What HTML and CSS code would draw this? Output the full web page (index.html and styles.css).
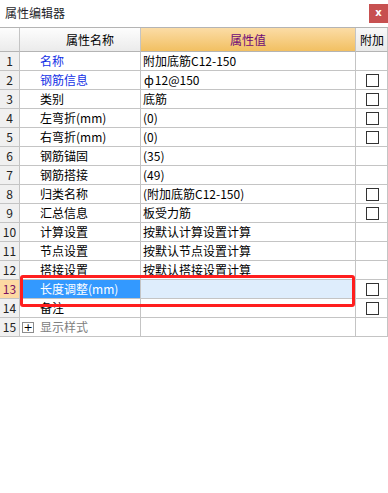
FILE: index.html
```html
<!DOCTYPE html>
<html lang="zh-CN">
<head>
    <meta charset="UTF-8">
    <title>属性编辑器</title>
    <link rel="stylesheet" href="styles.css">
</head>
<body>
    <div class="window">
        <div class="title-bar">
            <span class="title">属性编辑器</span>
            <span class="close">x</span>
        </div>

        <div class="grid">
            <div class="hd num"></div>
            <div class="hd name">属性名称</div>
            <div class="hd value">属性值</div>
            <div class="hd extra">附加</div>

            <div class="num">1</div><div class="name link">名称</div><div class="value">附加底筋C12-150</div><div class="extra"></div>
            <div class="num">2</div><div class="name link">钢筋信息</div><div class="value"><span class="bar">ф</span>12@150</div><div class="extra"><span class="check"></span></div>
            <div class="num">3</div><div class="name">类别</div><div class="value">底筋</div><div class="extra"><span class="check"></span></div>
            <div class="num">4</div><div class="name">左弯折(mm)</div><div class="value">(0)</div><div class="extra"><span class="check"></span></div>
            <div class="num">5</div><div class="name">右弯折(mm)</div><div class="value">(0)</div><div class="extra"><span class="check"></span></div>
            <div class="num">6</div><div class="name">钢筋锚固</div><div class="value">(35)</div><div class="extra"></div>
            <div class="num">7</div><div class="name">钢筋搭接</div><div class="value">(49)</div><div class="extra"></div>
            <div class="num">8</div><div class="name">归类名称</div><div class="value">(附加底筋C12-150)</div><div class="extra"><span class="check"></span></div>
            <div class="num">9</div><div class="name">汇总信息</div><div class="value">板受力筋</div><div class="extra"><span class="check"></span></div>
            <div class="num">10</div><div class="name">计算设置</div><div class="value">按默认计算设置计算</div><div class="extra"></div>
            <div class="num">11</div><div class="name">节点设置</div><div class="value">按默认节点设置计算</div><div class="extra"></div>
            <div class="num">12</div><div class="name">搭接设置</div><div class="value">按默认搭接设置计算</div><div class="extra"></div>
            <div class="num current">13</div><div class="name selected">长度调整(mm)</div><div class="value editing"></div><div class="extra"><span class="check"></span></div>
            <div class="num">14</div><div class="name">备注</div><div class="value"></div><div class="extra"><span class="check"></span></div>
            <div class="num">15</div><div class="name group"><span class="plus">+</span>显示样式</div><div class="value"></div><div class="extra"></div>
        </div>

        <div class="mark"></div>
    </div>
</body>
</html>
```

FILE: styles.css
```css
* {
    margin: 0;
    padding: 0;
    box-sizing: border-box;
}

body {
    background-color: #fff;
    font-family: "Noto Sans CJK SC", "DejaVu Sans", sans-serif;
    font-size: 12px;
    color: #000;
}

.window {
    position: relative;
    width: 388px;
    height: 493px;
}

.title-bar {
    display: flex;
    justify-content: space-between;
    align-items: flex-start;
    height: 27px;
}

.title {
    margin: 5px 0 0 5px;
    line-height: 16px;
    color: #1e1e2a;
}

.close {
    width: 19px;
    height: 19px;
    margin-top: 4px;
    background-color: #c75050;
    color: #fff;
    font-family: "DejaVu Sans", sans-serif;
    font-size: 10px;
    font-weight: bold;
    line-height: 17px;
    text-align: center;
}

.grid {
    display: grid;
    grid-template-columns: 20px 121px 215px 32px;
    grid-template-rows: 24px;
    grid-auto-rows: 19px;
    border-top: 1px solid #b4b4b4;
}

.grid > div {
    border-right: 1px solid #c4c4c4;
    border-bottom: 1px solid #c4c4c4;
    line-height: 18px;
    white-space: nowrap;
    overflow: hidden;
}

.grid > .hd {
    line-height: 23px;
    text-align: center;
    border-bottom-color: #b4b4b4;
    background: linear-gradient(#fdfdfd, #ebebeb);
}

.grid > .hd.value {
    padding: 0;
    color: #6e0a78;
    background: linear-gradient(#fbdca6, #f2c062);
}

.grid > .hd.extra {
    text-align: left;
    padding-left: 1px;
    background: linear-gradient(#f8f8f8, #e9e9e9);
}

.num {
    text-align: center;
    background-color: #f0f0f0;
    color: #222;
}

.num.current {
    background-color: #fdd9a2;
    color: #7a1060;
}

.name {
    padding-left: 20px;
}

.name.link {
    color: #1432e6;
}

.name.selected {
    background-color: #3399ff;
    color: #fff;
}

.name.group {
    display: flex;
    align-items: center;
    padding-left: 2px;
    color: #808080;
}

.plus {
    width: 12px;
    height: 11px;
    margin-right: 6px;
    border: 1px solid #8c8c8c;
    color: #000;
    font-family: "DejaVu Sans", sans-serif;
    font-size: 11px;
    line-height: 9px;
    text-align: center;
}

.value {
    padding-left: 2px;
}

.value.editing {
    background-color: #deedfc;
}

.bar {
    margin-left: 1px;
    margin-right: 1px;
}

.extra {
    display: flex;
    align-items: center;
    justify-content: center;
}

.check {
    width: 13px;
    height: 13px;
    margin-left: 2px;
    border: 1px solid #333;
    background-color: #fff;
}

.mark {
    position: absolute;
    left: 20px;
    top: 275px;
    width: 335px;
    height: 32px;
    border: 3px solid #ff1e1e;
    border-radius: 3px;
}
```
